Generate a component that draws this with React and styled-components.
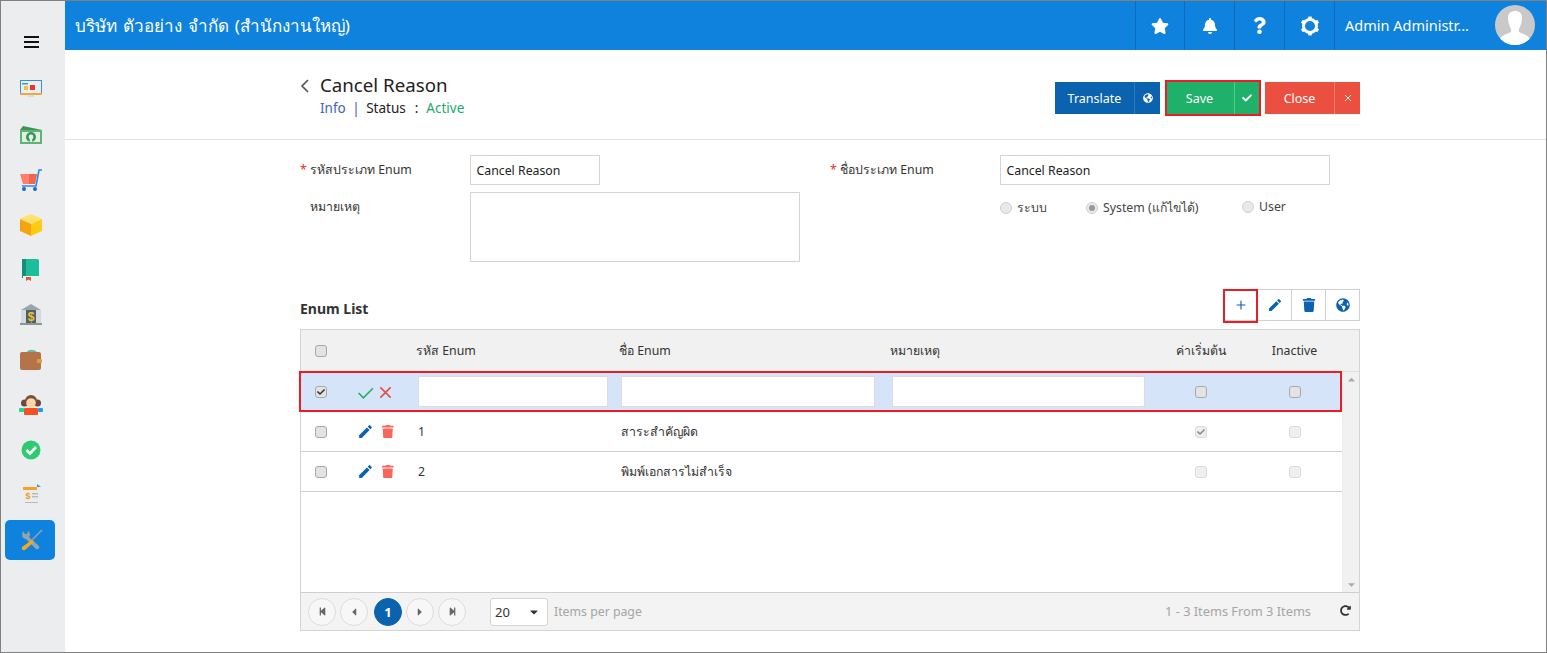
import React from "react";
import styled, { createGlobalStyle } from "styled-components";
import { FaStar, FaBell, FaQuestion, FaCheck, FaTrash, FaGlobeAmericas, FaStepBackward, FaStepForward, FaCaretLeft, FaCaretRight, FaCaretDown, FaCaretUp, FaRedoAlt } from "react-icons/fa";
import { MdEdit } from "react-icons/md";

const FONT = `"Noto Sans", "Open Sans", Tahoma, sans-serif`;

const Global = createGlobalStyle`
  html, body { margin: 0; padding: 0; height: 100%; background: #fff; }
  body { font-family: ${FONT}; font-size: 13px; color: #333; }
  * { box-sizing: border-box; }
`;

const Frame = styled.div`
  width: 1547px; height: 653px; border: 1px solid #808080; display: flex; overflow: hidden; background: #fff;
`;
const Sidebar = styled.aside`
  width: 64px; flex: none; background: #ecedef; display: flex; flex-direction: column; padding-left: 4px;
`;
const Burger = styled.div`
  height: 66px; width: 52px; padding-top: 35px; display: flex; flex-direction: column; align-items: center; gap: 3px;
  span { display: block; width: 15px; height: 2px; background: #111; }
`;
const Slot = styled.div`height: 45px; display: flex; align-items: center; width: 50px;`;
const Tile = styled.div`
  width: 50px; height: 40px; border-radius: 5px; display: flex; align-items: center; justify-content: center; padding-left: 2px;
  background: ${p => (p.$active ? "#0f82de" : "transparent")};
`;
const Main = styled.div`flex: 1; display: flex; flex-direction: column; min-width: 0;`;
const Header = styled.header`
  height: 49px; flex: none; background: #0f82de; color: #fff; display: flex; align-items: center;
`;
const Company = styled.div`flex: 1; padding-left: 10px; font-size: 17px; word-spacing: 1.5px; padding-bottom: 1px;`;
const HeadCell = styled.div`
  width: ${p => p.$w || 50}px; height: 49px; border-left: 1px solid #0c6cbb; display: flex; align-items: center; justify-content: center; font-size: 18px;
`;
const UserCell = styled.div`
  width: 212px; height: 49px; border-left: 1px solid #0c6cbb; display: flex; align-items: center; padding-left: 10px; font-size: 14.5px; gap: 20px; padding-bottom: 1px;
`;
const Avatar = styled.div`width: 40px; height: 40px; border-radius: 50%; overflow: hidden; background: #c9c9c9; flex: none;`;
const UserName = styled.span`width: 130px; white-space: nowrap;`;

const TopBar = styled.div`
  height: 90px; flex: none; border-bottom: 1px solid #e3e3e3; padding: 25px 186px 0 235px; display: flex; justify-content: space-between;
`;
const TitleWrap = styled.div`display: flex; gap: 10px;`;
const Back = styled.div`width: 10px; padding-top: 3px;`;
const Title = styled.div`font-size: 18.7px; line-height: 20px; color: #222;`;
const Sub = styled.div`font-size: 13.5px; line-height: 20px; margin-top: 3px; display: flex; gap: 5px; color: #222;`;
const Info = styled.span`color: #3f64ad;`;
const Bar = styled.span`color: #3f64ad; margin: 0 1.5px;`;
const Colon = styled.span`margin-left: 4px;`;
const Active = styled.span`color: #22a96b; margin-left: 3px;`;
const Actions = styled.div`display: flex; gap: 5px; padding-top: 7px;`;
const ActionBtn = styled.div`
  height: 32px; width: ${p => p.$w}px; background: ${p => p.$bg}; color: #fff; display: flex; font-size: 12.5px;
  ${p => p.$hl ? "outline: 2px solid #ed1c24; margin: 0 1px 0 2px;" : ""}
`;
const BtnText = styled.div`flex: 1; display: flex; align-items: center; justify-content: center; padding-right: ${p => p.$pr || 0}px;`;
const BtnIcon = styled.div`
  width: ${p => p.$w || 25}px; border-left: 1px solid ${p => p.$line}; display: flex; align-items: center; justify-content: center; font-size: 10px;
`;

const Content = styled.div`padding: 15px 186px 0 235px;`;
const Form = styled.div`display: grid; grid-template-columns: 170px 360px 170px 330px; grid-template-rows: 30px 70px; row-gap: 7px;`;
const Label = styled.label`
  font-size: 12.3px; color: #333; padding: 5px 0 0 ${p => (p.$req ? 0 : 10)}px; display: block;
`;
const Star = styled.span`color: #e5322d; display: inline-block; width: 10px;`;
const TextBox = styled.div`
  width: ${p => p.$w}px; height: ${p => p.$h || 30}px; border: 1px solid #d4d4d4; padding: 6px 5.5px; font-size: 12.3px; color: #222; line-height: 17px;
`;
const Radios = styled.div`grid-column: 4; display: flex; align-items: flex-start; padding-top: 6px; font-size: 12.3px; color: #444;`;
const RadioItem = styled.div`display: flex; align-items: center; gap: 5px; width: ${p => p.$w}px;`;
const RadioDot = styled.span`
  width: 12px; height: 12px; border-radius: 50%; border: 1px solid #d0d0d0; background: #e9e9e9; display: flex; align-items: center; justify-content: center;
  &::after { content: ""; width: 6px; height: 6px; border-radius: 50%; background: ${p => (p.$on ? "#999" : "transparent")}; }
`;
const Spacer = styled.div``;

const ListHead = styled.div`display: flex; justify-content: space-between; align-items: center; margin-top: 27px; height: 32px;`;
const ListTitle = styled.div`font-size: 14px; font-weight: 700; color: #333; padding-top: 7px;`;
const Tools = styled.div`display: flex;`;
const ToolBtn = styled.div`
  width: 35px; height: 32px; border: 1px solid #d0d0d0; margin-left: -1px; display: flex; align-items: center; justify-content: center; color: #0b62ae; font-size: 14px; background: #fff; position: relative;
  ${p => p.$hl ? `
    z-index: 1;
    &::after { content: ""; position: absolute; left: -1px; right: -1px; top: -1px; bottom: -3px; border: 2px solid #ed1c24; }
  ` : ""}
`;

const GridBox = styled.div`margin-top: 8px; width: 1060px; height: 302px; border: 1px solid #d4d4d4; display: flex; flex-direction: column; font-size: 12.3px;`;
const COLS = "40px 75px 203px 271px 265px 92px 95px";
const GridHead = styled.div`
  height: 42px; flex: none; background: #f1f1f1; display: grid; grid-template-columns: ${COLS} 1fr; align-items: center; border-bottom: 1px solid #dedede;
`;
const HeadText = styled.div`color: #333; text-align: ${p => (p.$center ? "center" : "left")};`;
const Center = styled.div`display: flex; justify-content: center; align-items: center; gap: ${p => p.$gap ?? 5}px; padding-right: ${p => p.$pr || 0}px;`;
const BodyWrap = styled.div`flex: 1; display: flex; min-height: 0;`;
const Rows = styled.div`width: 1041px; flex: none;`;
const Scroll = styled.div`
  flex: 1; background: #f1f1f1; border-left: 1px solid #ececec; display: flex; flex-direction: column; justify-content: space-between; align-items: center; padding: 2px 0; color: #aaa; font-size: 11px;
`;
const Row = styled.div`
  height: 40px; display: grid; grid-template-columns: ${COLS}; align-items: center; position: relative; color: #333;
  border-bottom: ${p => (p.$edit ? "none" : "1px solid #cfcfcf")};
  background: ${p => (p.$edit ? "#d6e4f9" : "#fff")};
  ${p => p.$edit ? `
    &::after { content: ""; position: absolute; left: -2px; right: 0; top: -1px; bottom: 0; border: 2px solid #ed1c24; pointer-events: none; }
  ` : ""}
`;
const CellText = styled.div`padding-left: 2px;`;
const CellInput = styled.div`
  margin: 0 0 2px 2px; width: ${p => p.$w}px; height: 31px; background: #fff; border: 1px solid #dcdcdc;
`;
const Check = styled.span`
  width: 12px; height: 12px; border-radius: 3px; display: flex; align-items: center; justify-content: center; font-size: 8px;
  border: 1px solid ${p => (p.$dim ? "#dcdcdc" : "#a8a8a8")};
  background: ${p => (p.$dim ? "#efefef" : "#e3e3e3")};
  color: ${p => (p.$dim ? "#888" : "#333")};
`;
const Pager = styled.div`
  height: 38px; flex: none; background: #f3f3f3; border-top: 1px solid #cfcfcf; display: flex; align-items: center; padding-left: 7px;
`;
const PageBtn = styled.div`
  width: 28px; height: 28px; border-radius: 50%; margin: 0 4px 0 ${p => (p.$on ? 2 : 0)}px; display: flex; align-items: center; justify-content: center; font-size: ${p => p.$fs || 9}px;
  border: 1px solid ${p => (p.$on ? "#0b62ae" : "#dcdcdc")};
  background: ${p => (p.$on ? "#0b62ae" : "#f7f7f7")};
  color: ${p => (p.$on ? "#fff" : "#666")};
  font-weight: ${p => (p.$on ? 700 : 400)};
`;
const Select = styled.div`
  width: 58px; height: 28px; margin-left: 20px; background: #fff; border: 1px solid #d4d4d4; border-radius: 3px; display: flex; align-items: center; justify-content: space-between; padding: 0 7px 0 4px; color: #333; font-size: 13px;
`;
const PerPage = styled.div`margin-left: 6px; color: #a5a5a5; flex: 1; font-size: 12.3px;`;
const Total = styled.div`color: #a5a5a5; font-size: 12.8px; margin-right: 29px; padding-bottom: 2px;`;
const Reload = styled.div`width: 12px; margin-right: 7px; font-size: 11px; padding-bottom: 2px; color: #333; display: flex;`;

const Pic = ({ children, w = 24, h = 22 }) => <svg width={w} height={h} viewBox="0 0 24 22">{children}</svg>;
const icons = [
  <Pic key="a"><rect x="1" y="1" width="22" height="15" fill="#3a8fd0" /><rect x="2" y="2" width="20" height="12" fill="#e9eef2" /><rect x="3" y="4" width="6" height="1.5" fill="#2aa" /><rect x="5" y="7" width="4" height="4" fill="#f0c040" /><rect x="11" y="6" width="5" height="5" fill="#e5392f" /><rect x="1" y="14" width="22" height="2" fill="#f9a53a" /><rect x="9" y="16" width="6" height="2" fill="#bfe3f0" /></Pic>,
  <Pic key="b"><path d="M4 2 L23 6 V8 H1 V6Z" fill="#3f9457" /><rect x="1" y="6" width="22" height="14" fill="#5fb475" /><rect x="3" y="8" width="18" height="10" fill="#dff1e3" /><circle cx="12" cy="13" r="5" fill="#3f9457" /><circle cx="12" cy="13" r="2.4" fill="#e4f2e7" /><rect x="10.8" y="14" width="2.4" height="4" fill="#dff1e3" /></Pic>,
  <Pic key="c"><path d="M1 5 H18 L16 15 H4Z" fill="#ff7f6a" /><path d="M10 5 H18 L16 15 H10Z" fill="#f0684c" /><path d="M3 17 H17 L20 1 H23" fill="none" stroke="#2f86ee" strokeWidth="1.6" /><circle cx="5" cy="20" r="2" fill="#1668d8" /><circle cx="16" cy="20" r="2" fill="#1668d8" /></Pic>,
  <Pic key="d"><path d="M12 0 L23 5 L12 10 L1 5Z" fill="#ffe16b" /><path d="M1 5 L12 10 V22 L1 17Z" fill="#f7a211" /><path d="M23 5 L12 10 V22 L23 17Z" fill="#fccb12" /></Pic>,
  <Pic key="e"><rect x="3" y="0" width="17" height="19" rx="1.5" fill="#1bbd9b" /><rect x="3" y="0" width="4" height="19" fill="#159078" /><rect x="4" y="17" width="16" height="2" fill="#e6f3ef" /><path d="M7 18 H12 V22 L9.5 20.5 L7 22Z" fill="#e5533d" /></Pic>,
  <Pic key="f"><path d="M12 0 L22 6 H2Z" fill="#9aa5ab" /><rect x="2" y="6" width="20" height="13" fill="#d5dadc" /><rect x="7" y="6" width="10" height="13" fill="#50606a" /><text x="12" y="17" fontSize="12" fontWeight="700" textAnchor="middle" fill="#f5c026" fontFamily="Liberation Sans, sans-serif">$</text><rect x="1" y="19" width="22" height="2" fill="#8b969c" /></Pic>,
  <Pic key="g"><path d="M6 6 C8 -1 17 -1 20 6Z" fill="#66bda8" /><rect x="1" y="3" width="21" height="18" rx="2" fill="#b5734a" /><rect x="18" y="10" width="5" height="4" rx="1" fill="#d6a03f" /></Pic>,
  <Pic key="h"><circle cx="5.5" cy="9" r="3.5" fill="#6a4a3c" /><circle cx="18.5" cy="9" r="3.5" fill="#6a4a3c" /><circle cx="12" cy="7" r="6" fill="#7a4f3a" /><circle cx="12" cy="9" r="4.8" fill="#fdd5a8" /><rect x="0" y="14" width="5" height="4" rx="1" fill="#19d9a0" /><rect x="19" y="14" width="5" height="4" rx="1" fill="#1f9fe8" /><rect x="5" y="14" width="14" height="7" rx="1" fill="#f4511e" /></Pic>,
  <Pic key="i"><circle cx="12" cy="11" r="9.5" fill="#2ecc71" /><path d="M7.5 11 L11 14.5 L17 8" fill="none" stroke="#fff" strokeWidth="2.6" /></Pic>,
  <Pic key="j"><rect x="4" y="0" width="17" height="21" fill="#ececec" /><rect x="4" y="3" width="14" height="3" fill="#f3a32c" /><path d="M18 0 L22 3 H18Z" fill="#3d94d6" /><text x="9" y="15" fontSize="9" fontWeight="700" textAnchor="middle" fill="#e8a020" fontFamily="Liberation Sans, sans-serif">$</text><rect x="13" y="9" width="6" height="1.5" fill="#bbb" /><rect x="13" y="12" width="6" height="1.5" fill="#bbb" /><rect x="6" y="18" width="13" height="1" fill="#bbb" /></Pic>,
  <Pic key="k"><path d="M4 2 L6 5 L8 5 L9 2 C12 4 11 7 10 8 L20 17 C21 19 19 21 17 20 L7 10 C4 10 2 7 4 2Z" fill="#93a4ad" /><path d="M23 1 L13 11" stroke="#93a4ad" strokeWidth="1.5" /><path d="M13 11 L15 13 L6 21 C4 22 2 20 3 18Z" fill="#f5a81c" /></Pic>,
];

const Gear = () => (
  <svg width="20" height="20" viewBox="0 0 20 20">
    <circle cx="10" cy="10" r="6.5" fill="none" stroke="#fff" strokeWidth="3" />
    {[0, 60, 120, 180, 240, 300].map(a => <rect key={a} x="8.2" y="0.6" width="3.6" height="3" fill="#fff" transform={`rotate(${a} 10 10)`} />)}
  </svg>
);
const Silhouette = () => (
  <svg width="40" height="40" viewBox="0 0 40 40">
    <path d="M13 12 C13 4 27 4 27 12 C27 18 25 22 24 24 V27 C28 29 34 30 36 36 L36 40 H4 V36 C6 30 12 29 16 27 V24 C15 22 13 18 13 12Z" fill="#fff" />
  </svg>
);
const Thin = ({ d, color, size = 16, w = 1.6 }) => (
  <svg width={size} height={size} viewBox="0 0 16 16"><path d={d} fill="none" stroke={color} strokeWidth={w} /></svg>
);

const ReadOnlyRow = ({ code, name, checked }) => (
  <Row>
    <Center><Check /></Center>
    <Center $pr={5} $gap={7}><MdEdit size={17} color="#0b62ae" /><FaTrash size={13.5} color="#f9665a" /></Center>
    <CellText>{code}</CellText>
    <CellText>{name}</CellText>
    <div />
    <Center><Check $dim>{checked && <FaCheck />}</Check></Center>
    <Center><Check $dim /></Center>
  </Row>
);

export default function App() {
  return (
    <Frame>
      <Global />
      <Sidebar>
        <Burger><span /><span /><span /></Burger>
        {icons.map((ic, i) => <Slot key={i}><Tile $active={i === 10}>{ic}</Tile></Slot>)}
      </Sidebar>
      <Main>
        <Header>
          <Company>บริษัท ตัวอย่าง จำกัด (สำนักงานใหญ่)</Company>
          <HeadCell $w={49}><FaStar /></HeadCell>
          <HeadCell><FaBell size={16} /></HeadCell>
          <HeadCell><FaQuestion size={17} /></HeadCell>
          <HeadCell><Gear /></HeadCell>
          <UserCell><UserName>Admin Administr...</UserName><Avatar><Silhouette /></Avatar></UserCell>
        </Header>
        <TopBar>
          <TitleWrap>
            <Back><Thin d="M8 2 L2 8 L8 14" color="#555" size={16} w={1.7} /></Back>
            <div>
              <Title>Cancel Reason</Title>
              <Sub><Info>Info</Info><Bar>|</Bar><span>Status</span><Colon>:</Colon><Active>Active</Active></Sub>
            </div>
          </TitleWrap>
          <Actions>
            <ActionBtn $w={105} $bg="#0b62ae"><BtnText>Translate</BtnText><BtnIcon $w={26} $line="#2b7cc2"><FaGlobeAmericas /></BtnIcon></ActionBtn>
            <ActionBtn $w={92} $bg="#1fb16a" $hl><BtnText $pr={2}>Save</BtnText><BtnIcon $line="#4fd18e"><FaCheck /></BtnIcon></ActionBtn>
            <ActionBtn $w={95} $bg="#eb4f3f"><BtnText>Close</BtnText><BtnIcon $w={26} $line="#f27c6f"><Thin d="M4 4 L12 12 M12 4 L4 12" color="#fff" size={12} w={1.2} /></BtnIcon></ActionBtn>
          </Actions>
        </TopBar>
        <Content>
          <Form>
            <Label $req><Star>*</Star>รหัสประเภท Enum</Label>
            <TextBox $w={130}>Cancel Reason</TextBox>
            <Label $req><Star>*</Star>ชื่อประเภท Enum</Label>
            <TextBox $w={330}>Cancel Reason</TextBox>
            <Label>หมายเหตุ</Label>
            <TextBox $w={330} $h={70} />
            <Spacer />
            <Radios>
              <RadioItem $w={86}><RadioDot /><span>ระบบ</span></RadioItem>
              <RadioItem $w={156}><RadioDot $on /><span>System (แก้ไขได้)</span></RadioItem>
              <RadioItem $w={60}><RadioDot /><span>User</span></RadioItem>
            </Radios>
          </Form>
          <ListHead>
            <ListTitle>Enum List</ListTitle>
            <Tools>
              <ToolBtn $hl><Thin d="M8 3 V13 M3 8 H13" color="#0b62ae" size={14} w={1.3} /></ToolBtn>
              <ToolBtn><MdEdit size={16} /></ToolBtn>
              <ToolBtn><FaTrash size={14} /></ToolBtn>
              <ToolBtn><FaGlobeAmericas size={14} /></ToolBtn>
            </Tools>
          </ListHead>
          <GridBox>
            <GridHead>
              <Center><Check /></Center>
              <div />
              <HeadText>รหัส Enum</HeadText>
              <HeadText>ชื่อ Enum</HeadText>
              <HeadText>หมายเหตุ</HeadText>
              <HeadText $center>ค่าเริ่มต้น</HeadText>
              <HeadText $center>Inactive</HeadText>
            </GridHead>
            <BodyWrap>
              <Rows>
                <Row $edit>
                  <Center><Check><FaCheck /></Check></Center>
                  <Center $pr={8} $gap={4}>
                    <Thin d="M1.5 8.5 L6 13 L15 4" color="#27ae60" size={17} w={1.5} />
                    <Thin d="M2.5 2.5 L13.5 13.5 M13.5 2.5 L2.5 13.5" color="#e0504a" size={15} w={1.7} />
                  </Center>
                  <CellInput $w={190} />
                  <CellInput $w={254} />
                  <CellInput $w={253} />
                  <Center><Check /></Center>
                  <Center><Check /></Center>
                </Row>
                <ReadOnlyRow code="1" name="สาระสำคัญผิด" checked />
                <ReadOnlyRow code="2" name="พิมพ์เอกสารไม่สำเร็จ" />
              </Rows>
              <Scroll><FaCaretUp /><FaCaretDown /></Scroll>
            </BodyWrap>
            <Pager>
              <PageBtn><FaStepBackward /></PageBtn>
              <PageBtn $fs={12}><FaCaretLeft /></PageBtn>
              <PageBtn $on $fs={13}>1</PageBtn>
              <PageBtn $fs={12}><FaCaretRight /></PageBtn>
              <PageBtn><FaStepForward /></PageBtn>
              <Select><span>20</span><FaCaretDown size={12} /></Select>
              <PerPage>Items per page</PerPage>
              <Total>1 - 3 Items From 3 Items</Total>
              <Reload><FaRedoAlt /></Reload>
            </Pager>
          </GridBox>
        </Content>
      </Main>
    </Frame>
  );
}
